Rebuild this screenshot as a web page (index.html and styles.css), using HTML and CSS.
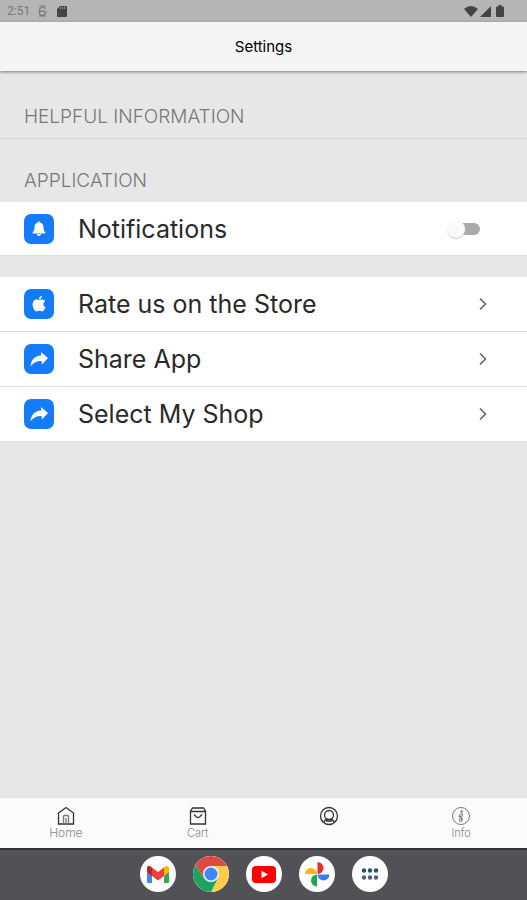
FILE: index.html
```html
<!DOCTYPE html>
<html lang="en">
<head>
<meta charset="utf-8">
<meta name="viewport" content="width=device-width, initial-scale=1">
<title>Settings</title>
<link rel="stylesheet" href="styles.css">
</head>
<body>
<div class="status">
  <span class="clock">2:51</span>
  <svg class="status-alert" width="9" height="12" viewBox="0 0 9 12" fill="none" stroke="#777" stroke-width="1.2"><path d="M1 1h7M7.500 3.500Q6.500 2.500 4.500 2.500T1.500 4.300 4.500 6.200 7.500 8.300 4.500 10.500 1.500 8.500V4M1 11h7"/></svg>
  <svg class="status-card" width="10" height="11" viewBox="0 0 10 11"><path fill="#444" d="M3 0h6q1 0 1 1v9q0 1-1 1H1q-1 0-1-1V3z"/><path stroke="#999" d="M3.500 1v2M5.500 1v2M7.500 1v2"/></svg>
  <svg class="status-wifi" width="14" height="11" viewBox="0 0 14 11"><path fill="#444" d="M0 3Q7-3 14 3L7 11z"/></svg>
  <svg width="11" height="11" viewBox="0 0 11 11"><path fill="#444" d="M11 0v11H0z"/></svg>
  <svg class="status-battery" width="8" height="12" viewBox="0 0 8 12"><path fill="#444" d="M2.500 0h3v1.500H7q1 0 1 1V11q0 1-1 1H1q-1 0-1-1V2.500q0-1 1-1h1.500z"/></svg>
</div>
<header class="header"><h1>Settings</h1></header>
<main class="content">
  <h2 class="section-title ruled">HELPFUL INFORMATION</h2>
  <h2 class="section-title">APPLICATION</h2>
  <label class="row single">
    <span class="tile"><svg width="30" height="30" viewBox="0 0 30 30"><path fill="#fff" d="M15 7.500c.7 0 1.100.5 1.100 1.100 2.400.6 3.400 2.400 3.400 4.700 0 2.700.6 3.800 1.700 4.900.4.500.2 1.300-.5 1.300H9.300c-.7 0-.9-.8-.5-1.300 1.100-1.100 1.700-2.200 1.700-4.900 0-2.300 1-4.100 3.400-4.700C13.900 8 14.300 7.500 15 7.500zM13 20h4c0 2.600-4 2.600-4 0z"/></svg></span>
    <span class="label">Notifications</span>
    <input class="switch" type="checkbox" role="switch">
  </label>
  <nav class="group" aria-label="Application">
    <a class="row" href="#rate">
      <span class="tile"><svg width="30" height="30" viewBox="0 0 30 30" fill="#fff"><path d="M15 11.300c1-.2 2-.8 3.200-.7 1.300.1 2.300.7 2.900 1.600-2.500 1.500-2.100 4.800.5 5.900-.8 2.200-2 4.300-3.600 4.300-1 0-1.400-.6-2.700-.6-1.300 0-1.800.6-2.700.6-1.900 0-4-3.800-4-6.900 0-3.200 1.900-4.900 3.900-4.900 1.100 0 1.900.6 2.500.7z"/><path d="M14.900 10.400c-.1-1.900 1.300-3.500 3-3.700.2 2-1.300 3.700-3 3.700z"/></svg></span>
      <span class="label">Rate us on the Store</span>
      <svg class="chevron" width="8" height="14" viewBox="0 0 8 14"><path d="M1 1.500L6.500 7 1 12.500"/></svg>
    </a>
    <a class="row" href="#share">
      <span class="tile"><svg width="30" height="30" viewBox="0 0 30 30"><path fill="#fff" d="M17 8l7 6-6 6.500-.5-3.500c-4-.3-8 1.500-11 5.300C7 16 10.500 12 17 11.500z"/></svg></span>
      <span class="label">Share App</span>
      <svg class="chevron" width="8" height="14" viewBox="0 0 8 14"><path d="M1 1.500L6.500 7 1 12.500"/></svg>
    </a>
    <a class="row" href="#shop">
      <span class="tile"><svg width="30" height="30" viewBox="0 0 30 30"><path fill="#fff" d="M17 8l7 6-6 6.500-.5-3.500c-4-.3-8 1.500-11 5.300C7 16 10.500 12 17 11.500z"/></svg></span>
      <span class="label">Select My Shop</span>
      <svg class="chevron" width="8" height="14" viewBox="0 0 8 14"><path d="M1 1.500L6.500 7 1 12.500"/></svg>
    </a>
  </nav>
</main>
<nav class="tabs" aria-label="Main">
  <a class="tab home" href="#home">
    <svg width="20" height="20" viewBox="0 0 20 20"><path d="M2.500 7L10 1.500 17.500 7v11h-15z"/><path stroke="#777" d="M7.500 18v-7.500q0-1 1-1h3q1 0 1 1V18M10 12v6"/></svg>
    <span>Home</span>
  </a>
  <a class="tab" href="#cart">
    <svg width="20" height="20" viewBox="0 0 20 20"><path d="M2.500 5L4.500 2h11l2 3v13h-15zM2.500 5.500h15M6 8.500l2.500 2.500q1.500 1 3 0L14 8.500"/></svg>
    <span>Cart</span>
  </a>
  <a class="tab" href="#settings" aria-label="Settings" aria-current="page">
    <svg width="20" height="20" viewBox="0 0 20 20"><circle cx="10" cy="10" r="8.500"/><circle cx="10" cy="9" r="4.500"/><path d="M4.500 16.500Q5.500 14 7.500 13v2h5v-2q2 1 3 3.500"/></svg>
  </a>
  <a class="tab info" href="#info">
    <svg width="20" height="20" viewBox="0 0 20 20"><circle cx="10" cy="10" r="8.500"/><path d="M10.500 4.200l-1 2 1.200.6.800-2zM8 9.500l2-1.500h1.500L10 14l1.500-1v1.500L9.500 16 8.500 15l1-5-1.500.800z"/></svg>
    <span>Info</span>
  </a>
</nav>
<footer class="dock">
  <button class="app" aria-label="Gmail"><svg width="36" height="36" viewBox="0 0 36 36"><path fill="#4285f4" d="M7 13l5 4v10H8.500Q7 27 7 25.500z"/><path fill="#34a853" d="M29 13l-5 4v10h3.500q1.500 0 1.500-1.500z"/><path fill="#fbbc04" d="M24 11.500q5-4 5 1.500v3l-5 4z"/><path fill="#c5221f" d="M12 11.500q-5-4-5 1.500v3l5 4z"/><path fill="#ea4335" d="M12 11.500l6 4.500 6-4.500V20l-6 4.500-6-4.500z"/></svg></button>
  <button class="app" aria-label="Chrome"><svg width="36" height="36" viewBox="0 0 36 36"><path fill="#ffcd46" d="M18 10h16.100A18 18 0 0 1 18 36l7-14z"/><path fill="#1da261" d="M2.400 9A18 18 0 0 0 18 36l7-14H11z"/><path fill="#dd4b3e" d="M18 10h16.100A18 18 0 0 0 2.400 9L11 22z"/><circle cx="18" cy="18" r="8" fill="#e8f1ff"/><circle cx="18" cy="18" r="6.500" fill="#4285f4"/></svg></button>
  <button class="app" aria-label="YouTube"><svg width="36" height="36" viewBox="0 0 36 36"><rect x="6" y="10" width="24" height="17" rx="4" fill="#f00"/><path fill="#fff" d="M15.500 14.800l6.500 3.700-6.500 3.700z"/></svg></button>
  <button class="app" aria-label="Photos"><svg width="36" height="36" viewBox="0 0 36 36"><path fill="#ea2b28" d="M18.500 18V6a6 6 0 0 1 0 12z"/><path fill="#3b7cf0" d="M18 18.500h12.500a6 6 0 0 1-12 0z"/><path fill="#1fa84f" d="M18 18.500v12a6 6 0 0 1 0-12z"/><path fill="#fbb904" d="M18 18H6a6 6 0 0 1 12 0z"/></svg></button>
  <button class="app" aria-label="All apps"><svg width="36" height="36" viewBox="0 0 36 36"><g fill="#1d5969"><circle cx="12" cy="14.500" r="2.200"/><circle cx="18" cy="14.500" r="2.200"/><circle cx="24" cy="14.500" r="2.200"/></g><g fill="#536078"><circle cx="12" cy="21.500" r="2.200"/><circle cx="18" cy="21.500" r="2.200"/><circle cx="24" cy="21.500" r="2.200"/></g></svg></button>
</footer>
</body>
</html>
```
FILE: styles.css
```css
* { box-sizing: border-box; }
body {
  margin: 0;
  min-height: 100vh;
  display: flex;
  flex-direction: column;
  background: #e7e7e7;
  color: #2a2a2a;
  font-family: Inter, Roboto, sans-serif;
}
h1, h2 { margin: 0; }
a { color: inherit; text-decoration: none; }
svg { display: block; flex: none; }

.status {
  height: 22px;
  display: flex;
  align-items: center;
  padding: 0 23px 0 7px;
  background: #b5b5b5;
}
.clock { font: 400 12px/22px Roboto, sans-serif; color: #777; }
.status-alert { margin-left: 8px; }
.status-card { margin-left: 10px; }
.status-wifi { margin-left: auto; margin-right: 2px; }
.status-battery { margin-left: 5px; }

.header {
  height: 49px;
  display: flex;
  align-items: center;
  justify-content: center;
  background: #f5f5f5;
  box-shadow: 0 1px 3px #777;
}
.header h1 { font-size: 15px; line-height: 20px; font-weight: 400; color: #000; }

.content { flex: 1; }
.section-title {
  padding: 30px 24px 9px;
  font-size: 19px;
  line-height: 24px;
  font-weight: 300;
  color: #777;
}
.section-title.ruled { padding-top: 34px; border-bottom: 1px solid #d2d2d2; }

.row {
  min-height: 55px;
  display: flex;
  align-items: center;
  padding: 0 39px 0 24px;
  background: #fff;
  border-bottom: 1px solid #dedede;
}
.row.single { min-height: 54px; padding-right: 47px; }
.group { margin-top: 21px; }
.tile {
  flex: none;
  margin-right: 24px;
  border-radius: 7px;
  background: #147bfb;
}
.label {
  flex: 1;
  font-size: 25px;
  line-height: 32px;
  font-weight: 400;
}
.chevron {
  margin-right: 1px;
  fill: none;
  stroke: #666;
  stroke-width: 1.6;
}
.switch {
  appearance: none;
  position: relative;
  width: 33px;
  height: 20px;
  margin: 0;
}
.switch::before,
.switch::after { content: ""; position: absolute; }
.switch::before {
  inset: 4px 0 4px 4px;
  border-radius: 6px;
  background: #aaa;
}
.switch::after {
  left: 0;
  top: 1px;
  width: 18px;
  height: 18px;
  border-radius: 50%;
  background: #fafafa;
  box-shadow: 0 1px 1px #ccc;
}

.tabs {
  height: 51px;
  display: flex;
  background: #fbfbfb;
  border-top: 1px solid #e0e0e0;
}
.tab {
  flex: 1;
  display: flex;
  flex-direction: column;
  align-items: center;
  padding-top: 8px;
  font-size: 11px;
  line-height: 14px;
  font-weight: 300;
  color: #888;
}
.tab.home { font-size: 12px; }
.tab svg { fill: none; stroke: #333; stroke-width: 1.3; }
.tab.info svg { stroke: #777; stroke-width: 1; }

.dock {
  height: 52px;
  display: flex;
  align-items: center;
  justify-content: center;
  gap: 17px;
  padding-bottom: 2px;
  background: #525156;
  border-top: 2px solid #333237;
}
.app {
  flex: none;
  padding: 0;
  border: 0;
  border-radius: 50%;
  background: #fff;
  overflow: hidden;
}
```
